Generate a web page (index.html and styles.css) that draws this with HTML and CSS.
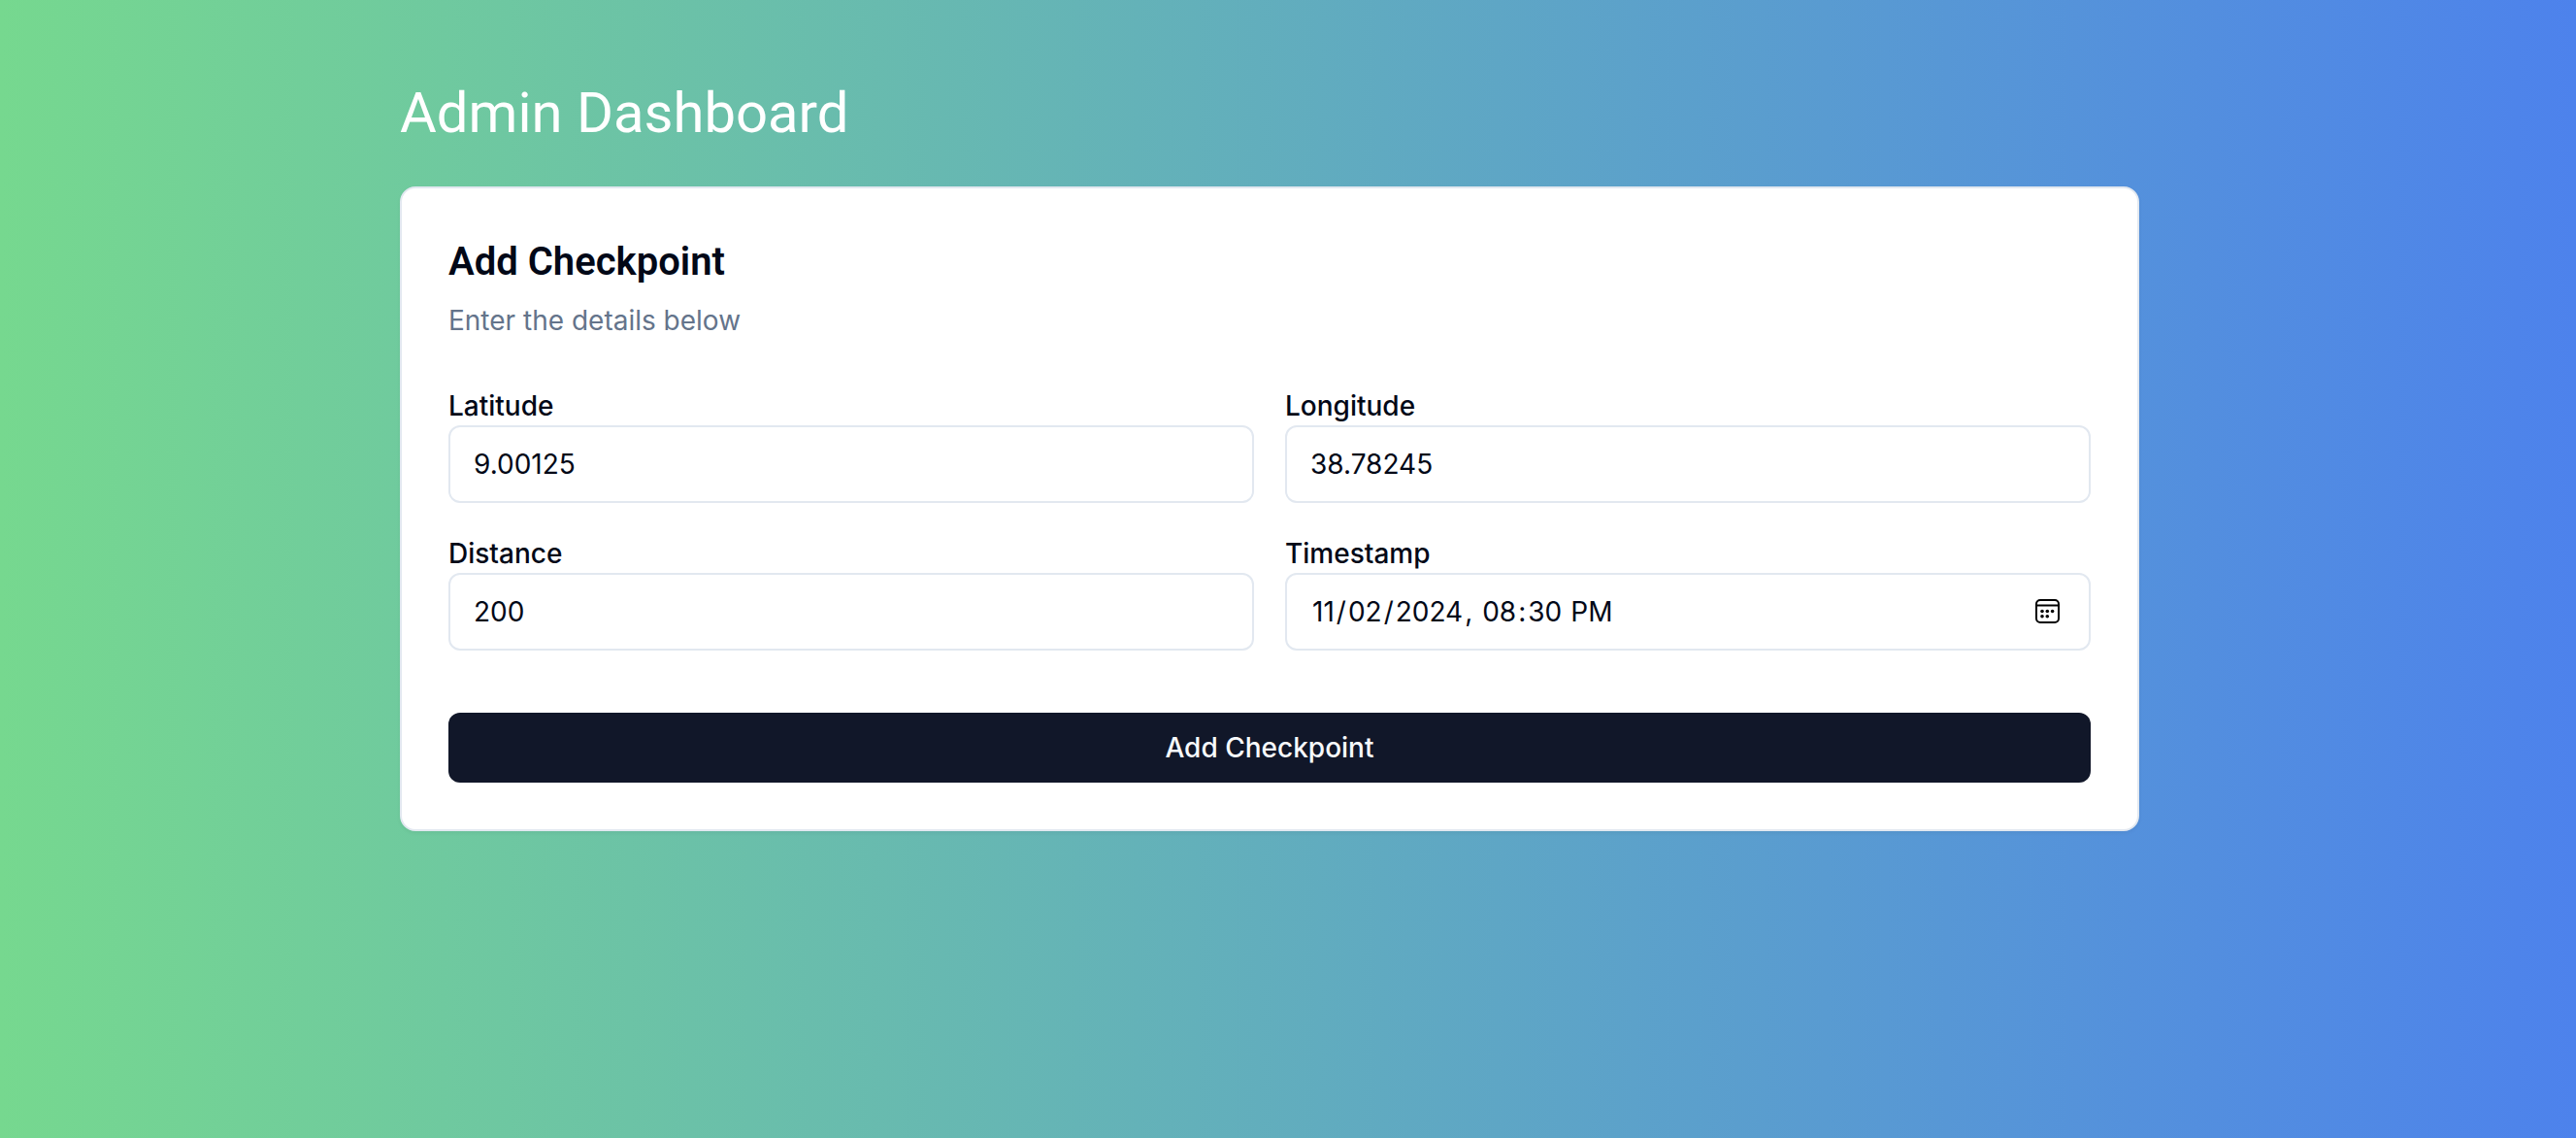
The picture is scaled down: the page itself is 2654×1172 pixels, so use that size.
FILE: index.html
```html
<!DOCTYPE html>
<html lang="en">
<head>
<meta charset="utf-8">
<title>Admin Dashboard</title>
<link rel="stylesheet" href="styles.css">
</head>
<body>
<main class="page">
  <h1 class="page-title">Admin Dashboard</h1>
  <section class="card">
    <header class="card-header">
      <h2 class="card-title">Add Checkpoint</h2>
      <p class="card-description">Enter the details below</p>
    </header>
    <form class="form">
      <div class="fields">
        <div class="field">
          <label for="latitude">Latitude</label>
          <input id="latitude" type="number" step="any" value="9.00125">
        </div>
        <div class="field">
          <label for="longitude">Longitude</label>
          <input id="longitude" type="number" step="any" value="38.78245">
        </div>
        <div class="field">
          <label for="distance">Distance</label>
          <input id="distance" type="number" value="200">
        </div>
        <div class="field">
          <label for="timestamp">Timestamp</label>
          <input id="timestamp" type="datetime-local" value="2024-11-02T20:30">
        </div>
      </div>
      <button class="submit" type="submit">Add Checkpoint</button>
    </form>
  </section>
</main>
</body>
</html>
```
FILE: styles.css
```css
* {
  box-sizing: border-box;
  margin: 0;
}

body {
  min-height: 100vh;
  padding: 80px 70px 80px 32px;
  background: linear-gradient(to right, #76d88f, #4d82ec);
  color: #020817;
  font-family: Inter, "Liberation Sans", sans-serif;
  font-size: 28px;
  line-height: 40px;
}

.page {
  max-width: 1792px;
  margin: 0 auto;
  display: flex;
  flex-direction: column;
  gap: 40px;
}

.page-title,
.card-title {
  font-family: Roboto, Inter, sans-serif;
}

.page-title {
  color: #fff;
  font-size: 58px;
  font-weight: 400;
  line-height: 72px;
}

.card {
  padding: 48px;
  display: flex;
  flex-direction: column;
  gap: 48px;
  background: #fff;
  border: 2px solid #e2e8f0;
  border-radius: 16px;
  box-shadow: 0 2px 4px rgb(0 0 0 / 5%);
}

.card-header {
  display: flex;
  flex-direction: column;
  gap: 12px;
}

.card-title {
  font-size: 40px;
  font-weight: 600;
  line-height: 56px;
}

.card-description {
  color: #64748b;
}

.form {
  display: flex;
  flex-direction: column;
  gap: 64px;
}

.fields {
  display: grid;
  grid-template-columns: 1fr 1fr;
  gap: 32px;
}

.field {
  display: flex;
  flex-direction: column;
}

.field label {
  font-weight: 500;
}

.field input {
  width: 100%;
  height: 80px;
  padding: 16px 24px;
  background: #fff;
  border: 2px solid #e2e8f0;
  border-radius: 12px;
  color: inherit;
  font: inherit;
}

.field input::-webkit-datetime-edit-month-field,
.field input::-webkit-datetime-edit-day-field,
.field input::-webkit-datetime-edit-year-field,
.field input::-webkit-datetime-edit-hour-field,
.field input::-webkit-datetime-edit-minute-field,
.field input::-webkit-datetime-edit-ampm-field {
  padding: 0 2px;
}

.field input::-webkit-calendar-picker-indicator {
  width: 28px;
  height: 28px;
  padding: 0;
  margin-right: 4px;
  background: url("data:image/svg+xml,%3Csvg xmlns='http://www.w3.org/2000/svg' viewBox='0 0 28 28' fill='none' stroke='%23000' stroke-width='2'%3E%3Crect x='2' y='2' width='23' height='23' rx='4'/%3E%3Cpath d='M2 7.5h23'/%3E%3Cg fill='%23000' stroke='none'%3E%3Ccircle cx='8' cy='13.5' r='1.8'/%3E%3Ccircle cx='13.3' cy='13.5' r='1.8'/%3E%3Ccircle cx='18.6' cy='13.5' r='1.8'/%3E%3Ccircle cx='8' cy='18.8' r='1.8'/%3E%3Ccircle cx='13.3' cy='18.8' r='1.8'/%3E%3C/g%3E%3C/svg%3E") center / 28px no-repeat;
}

.submit {
  height: 72px;
  padding: 0 32px;
  background: #111729;
  border: 0;
  border-radius: 12px;
  color: #f8fafc;
  font: inherit;
  font-weight: 500;
}
```
